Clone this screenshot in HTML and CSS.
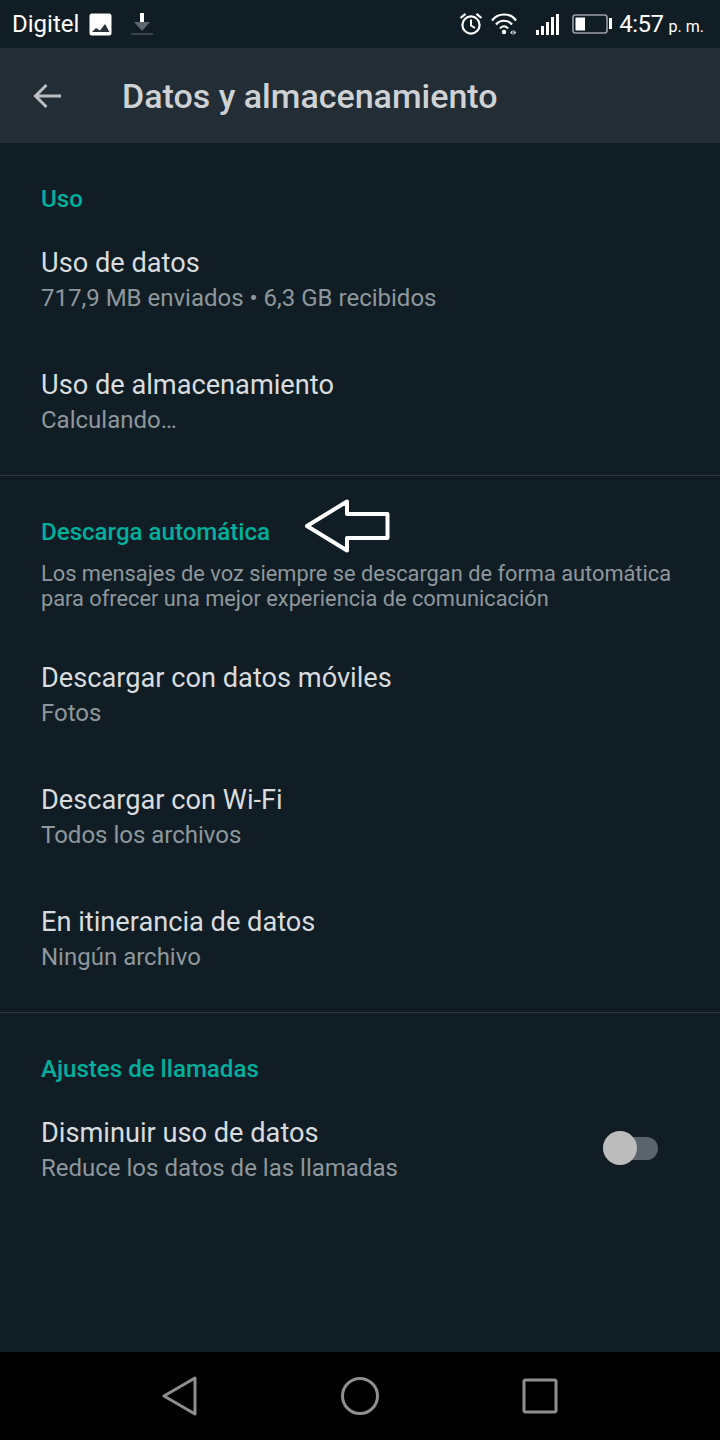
FILE: index.html
```html
<!DOCTYPE html>
<html lang="es">
<head>
    <meta charset="UTF-8">
    <meta name="viewport" content="width=device-width, initial-scale=1.0">
    <title>Datos y almacenamiento</title>
    <link rel="stylesheet" href="styles.css">
</head>
<body>
    <div class="phone">
        <div class="status-bar">
            <div class="status-left">
                <span class="carrier">Digitel</span>
                <svg class="icon-picture" width="23" height="23" viewBox="0 0 23 23">
                    <rect x="0.5" y="0.5" width="22" height="22" rx="2.5" fill="#fff"/>
                    <path d="M3 19 L7 15 L11 17.5 L16 11 L20.5 19 Z" fill="#27323a"/>
                </svg>
                <svg class="icon-download" width="22" height="22" viewBox="0 0 22 22">
                    <rect x="9" y="0" width="4" height="9" fill="#fff"/>
                    <path d="M3 9 H19 L11 18 Z" fill="#5f676c"/>
                    <rect x="0" y="20.5" width="22" height="1" fill="#5f676c"/>
                </svg>
            </div>
            <div class="status-right">
                <svg class="icon-alarm" width="24" height="24" viewBox="0 0 24 24" fill="none" stroke="#fff">
                    <circle cx="12" cy="13" r="8.6" stroke-width="2.2"/>
                    <path d="M12 7.5 V13.5 L16 16" stroke-width="2"/>
                    <path d="M1.5 6 L6.5 1.8 M22.5 6 L17.5 1.8" stroke-width="2.2"/>
                </svg>
                <svg class="icon-wifi" width="28" height="24" viewBox="0 0 28 24" fill="none" stroke="#fff" stroke-width="2.2">
                    <path d="M1 8.5 C7 0.5 19 0.5 25 8.5"/>
                    <path d="M5 12.5 C9 7.5 17 7.5 21 12.5"/>
                    <path d="M9 16.5 C11 13.5 15 13.5 17 16.5"/>
                    <circle cx="13" cy="20" r="2.2" fill="#fff" stroke="none"/>
                    <path d="M21.5 18 V23 L19 20.5 Z M22.5 18 V23 L25.5 20.5 Z" fill="#c4c7c9" stroke="none"/>
                </svg>
                <svg class="icon-signal" width="24" height="24" viewBox="0 0 24 24" fill="#fff">
                    <rect x="1" y="18" width="3" height="5"/>
                    <rect x="6" y="14" width="3" height="9"/>
                    <rect x="11" y="10" width="3" height="13"/>
                    <rect x="16" y="5" width="3" height="18"/>
                    <rect x="21" y="2" width="3" height="21"/>
                </svg>
                <svg class="icon-battery" width="40" height="20" viewBox="0 0 40 20">
                    <rect x="1" y="1" width="34" height="18" rx="2.5" fill="none" stroke="#9a9fa3" stroke-width="1.6"/>
                    <rect x="3.5" y="3.5" width="9.5" height="13" fill="#fff"/>
                    <rect x="37" y="4" width="3" height="11" fill="#fff"/>
                </svg>
                <span class="clock">4:57</span>
                <span class="ampm">p. m.</span>
            </div>
        </div>

        <div class="toolbar">
            <svg class="icon-back" width="30" height="26" viewBox="0 0 30 26" fill="none" stroke="#bcbfc2" stroke-width="3">
                <path d="M28 13 H3 M13.5 2 L2.5 13 L13.5 24"/>
            </svg>
            <span class="toolbar-title">Datos y almacenamiento</span>
        </div>

        <div class="content">
            <section class="section section-uso">
                <h2 class="section-title">Uso</h2>
                <div class="row">
                    <div class="row-title">Uso de datos</div>
                    <div class="row-sub">717,9 MB enviados • 6,3 GB recibidos</div>
                </div>
                <div class="row">
                    <div class="row-title">Uso de almacenamiento</div>
                    <div class="row-sub">Calculando…</div>
                </div>
            </section>

            <section class="section section-descarga">
                <div class="title-with-arrow">
                    <h2 class="section-title">Descarga automática</h2>
                    <svg class="big-arrow" width="86" height="54" viewBox="0 0 86 54" fill="none" stroke="#fff" stroke-width="4" stroke-linejoin="round">
                        <path d="M3 27 L43 2.5 V15 H83.5 V39 H43 V51.5 Z"/>
                    </svg>
                </div>
                <p class="section-note">Los mensajes de voz siempre se descargan de forma automática para ofrecer una mejor experiencia de comunicación</p>
                <div class="row">
                    <div class="row-title">Descargar con datos móviles</div>
                    <div class="row-sub">Fotos</div>
                </div>
                <div class="row">
                    <div class="row-title">Descargar con Wi-Fi</div>
                    <div class="row-sub">Todos los archivos</div>
                </div>
                <div class="row">
                    <div class="row-title">En itinerancia de datos</div>
                    <div class="row-sub">Ningún archivo</div>
                </div>
            </section>

            <section class="section section-llamadas">
                <h2 class="section-title">Ajustes de llamadas</h2>
                <div class="row row-switch">
                    <div>
                        <div class="row-title">Disminuir uso de datos</div>
                        <div class="row-sub">Reduce los datos de las llamadas</div>
                    </div>
                    <div class="switch"><div class="switch-knob"></div></div>
                </div>
            </section>
        </div>

        <div class="nav-bar">
            <svg width="36" height="40" viewBox="0 0 36 40" fill="none" stroke="#8f8f8f" stroke-width="3" stroke-linejoin="round">
                <path d="M2 20 L33 2 V38 Z"/>
            </svg>
            <svg width="40" height="40" viewBox="0 0 40 40" fill="none" stroke="#8f8f8f" stroke-width="3">
                <circle cx="20" cy="20" r="17.5"/>
            </svg>
            <svg width="36" height="36" viewBox="0 0 36 36" fill="none" stroke="#8f8f8f" stroke-width="3" stroke-linejoin="round">
                <rect x="2" y="2" width="32" height="32" rx="1.5"/>
            </svg>
        </div>
    </div>
</body>
</html>
```

FILE: styles.css
```css
* {
    box-sizing: border-box;
}
body {
    margin: 0;
    background: #111d25;
    font-family: Roboto, "Noto Sans", sans-serif;
}
.phone {
    width: 720px;
    height: 1440px;
    display: flex;
    flex-direction: column;
    overflow: hidden;
}
.status-bar {
    height: 48px;
    flex: none;
    display: flex;
    justify-content: space-between;
    align-items: center;
    padding: 0 16px 0 12px;
    background: #111d25;
    color: #fff;
}
.status-left,
.status-right {
    display: flex;
    align-items: center;
}
.carrier {
    font-size: 24px;
    margin-right: 10px;
}
.icon-download {
    margin-left: 19px;
}
.icon-alarm {
    margin-right: 8px;
}
.icon-wifi {
    margin-right: 16px;
}
.icon-signal {
    margin-right: 13px;
}
.icon-battery {
    margin-right: 7px;
}
.clock {
    font-size: 24px;
    letter-spacing: -0.5px;
}
.ampm {
    font-size: 16px;
    margin-left: 5px;
    margin-top: 5px;
}
.toolbar {
    height: 95px;
    flex: none;
    display: flex;
    align-items: center;
    padding-left: 33px;
    background: #232d36;
}
.toolbar-title {
    margin-left: 59px;
    font-size: 34px;
    font-weight: 500;
    color: #cfd2d4;
}
.content {
    flex: 1;
}
.section {
    padding-left: 41px;
    padding-right: 41px;
    border-bottom: 1px solid #2c353d;
}
.section-uso {
    height: 333px;
    padding-top: 41px;
}
.section-descarga {
    height: 537px;
    padding-top: 41px;
}
.section-llamadas {
    padding-top: 41px;
    border-bottom: none;
}
.section-title {
    margin: 0;
    font-size: 24.1px;
    line-height: 30px;
    font-weight: 500;
    color: #00af9c;
}
.title-with-arrow {
    display: flex;
    align-items: center;
    height: 30px;
}
.big-arrow {
    margin-left: 34px;
    margin-top: -13px;
}
.section-note {
    margin: 14px 0 19px;
    font-size: 21.8px;
    line-height: 25px;
    color: #8e979c;
}
.row {
    height: 122px;
    padding-top: 31px;
}
.section-descarga .row {
    padding-top: 30px;
}
.row-title {
    font-size: 27.2px;
    line-height: 36px;
    color: #d9dcde;
}
.row-sub {
    font-size: 24px;
    line-height: 35px;
    color: #8e979c;
}
.row-switch {
    display: flex;
    justify-content: space-between;
    align-items: flex-start;
}
.switch {
    position: relative;
    width: 55px;
    height: 23px;
    margin: 22px 21px 0 0;
    background: #5a646a;
    border-radius: 12px;
}
.switch-knob {
    position: absolute;
    left: 0;
    top: -6px;
    width: 34px;
    height: 34px;
    border-radius: 50%;
    background: #bcbcbc;
}
.nav-bar {
    height: 88px;
    flex: none;
    display: flex;
    align-items: center;
    justify-content: space-between;
    padding: 0 162px;
    background: #000;
}
```
